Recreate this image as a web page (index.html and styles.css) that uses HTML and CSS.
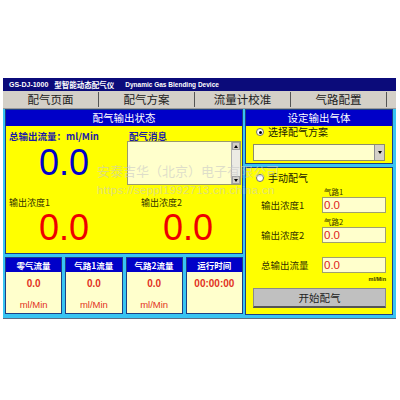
FILE: index.html
```html
<!DOCTYPE html>
<html>
<head>
<meta charset="utf-8">
<link rel="stylesheet" href="styles.css">
</head>
<body>
<div class="window">
  <div class="titlebar"><span class="t-code">GS-DJ-1000</span><span class="t-cn">型智能动态配气仪</span><span class="t-en">Dynamic Gas Blending Device</span></div>
  <div class="tabs">
    <div class="tab">配气页面</div>
    <div class="tab">配气方案</div>
    <div class="tab">流量计校准</div>
    <div class="tab">气路配置</div>
  </div>
  <div class="main">
    <div class="left">
      <div class="panel status">
        <div class="phead">配气输出状态</div>
        <div class="status-body">
          <div class="col col1">
            <div class="lbl-blue">总输出流量：ml/Min</div>
            <div class="big blue">0.0</div>
            <div class="lbl">输出浓度1</div>
            <div class="big red">0.0</div>
          </div>
          <div class="col col2">
            <div class="lbl-blue">配气消息</div>
            <div class="msgbox">
              <div class="vscroll">
                <span class="sbtn"><span class="arr-up"></span></span>
                <span class="strack"></span>
                <span class="sbtn"><span class="arr-down"></span></span>
              </div>
            </div>
            <div class="lbl lbl2">输出浓度2</div>
            <div class="big red">0.0</div>
          </div>
        </div>
      </div>
      <div class="stats">
        <div class="stat"><div class="shead">零气流量</div><div class="sbody"><div class="sval">0.0</div><div class="sunit">ml/Min</div></div></div>
        <div class="stat"><div class="shead">气路1流量</div><div class="sbody"><div class="sval">0.0</div><div class="sunit">ml/Min</div></div></div>
        <div class="stat"><div class="shead">气路2流量</div><div class="sbody"><div class="sval">0.0</div><div class="sunit">ml/Min</div></div></div>
        <div class="stat"><div class="shead">运行时间</div><div class="sbody"><div class="sval">00:00:00</div></div></div>
      </div>
    </div>
    <div class="right">
      <div class="panel setp">
        <div class="phead">设定输出气体</div>
        <div class="set-body">
          <div class="radio-row"><span class="radio checked"></span><span class="rtext">选择配气方案</span></div>
          <div class="select"><span class="sel-btn"><span class="arr-down"></span></span></div>
        </div>
      </div>
      <div class="panel manual">
        <div class="radio-row"><span class="radio"></span><span class="rtext">手动配气</span></div>
        <div class="sub">气路1</div>
        <div class="field"><span class="flabel">输出浓度1</span><span class="finput">0.0</span></div>
        <div class="sub">气路2</div>
        <div class="field"><span class="flabel">输出浓度2</span><span class="finput">0.0</span></div>
        <div class="field field3"><span class="flabel">总输出流量</span><span class="finput">0.0</span></div>
        <div class="unit">ml/Min</div>
        <div class="btn">开始配气</div>
      </div>
    </div>
  </div>
  <div class="watermark">
    <div class="wm1">安泰吉华（北京）电子有限公司</div>
    <div class="wm2">https://seppl1992713.cn.china.cn</div>
  </div>
</div>
</body>
</html>
```

FILE: styles.css
```css
body {
  margin: 0;
  background: #ffffff;
  font-family: "Noto Sans CJK SC", "Liberation Sans", sans-serif;
}

.window {
  position: relative;
  margin: 78px 0 0 3px;
  width: 393px;
  background: #d4d0c8;
}

.titlebar {
  height: 13px;
  background: #0b0b7a;
  color: #ffffff;
  font-family: "Liberation Sans", "Noto Sans CJK SC", sans-serif;
  font-weight: bold;
  font-size: 7px;
  line-height: 13px;
  padding-left: 6px;
  white-space: nowrap;
  display: flex;
}
.t-cn { margin-left: 6px; font-size: 7.5px; font-family: "Noto Sans CJK SC", sans-serif; }
.t-en { margin-left: 11px; font-size: 6.5px; }

.tabs {
  height: 17px;
  display: flex;
  background: #d4d0c8;
  border-bottom: 1px solid #9a9a9a;
}
.tab {
  width: 95px;
  border-right: 1px solid #555555;
  margin: 1px 0;
  text-align: center;
  font-size: 11.5px;
  line-height: 15px;
  color: #202020;
}

.main {
  display: flex;
  gap: 2px;
  padding: 0 2px 3px 2px;
  background: #38c4f2;
  border-bottom: 1px solid #5b6d86;
  height: 206px;
}

.left {
  width: 238px;
  display: flex;
  flex-direction: column;
  gap: 3px;
}
.right {
  width: 148px;
  display: flex;
  flex-direction: column;
  gap: 3px;
}

.panel {
  border: 1px solid #1d3f86;
  background: #ffff00;
}
.phead {
  height: 16px;
  background: #0000c8;
  color: #ffffff;
  font-size: 10.5px;
  line-height: 16px;
  text-align: center;
}

.status { height: 143px; }
.status-body {
  display: flex;
  height: 127px;
}
.col { display: flex; flex-direction: column; }
.col1 { width: 117px; padding-left: 3px; }
.col2 { flex: 1; }

.lbl-blue {
  margin-top: 5px;
  height: 10px;
  line-height: 10px;
  font-size: 9.5px;
  font-weight: bold;
  color: #1a1aa8;
  white-space: nowrap;
}
.col2 .lbl-blue { padding-left: 3px; }

.big {
  font-family: "Liberation Sans", sans-serif;
  font-size: 36px;
  line-height: 36px;
  height: 36px;
}
.blue { color: #0000cc; margin-top: 4px; padding-left: 30px; }
.red { color: #ee0000; margin-top: 2px; padding-left: 30px; }
.col2 .red { padding-left: 37px; }

.lbl {
  margin-top: 17px;
  height: 10px;
  line-height: 10px;
  font-size: 9px;
  color: #333300;
}
.lbl2 { margin-top: 13px; padding-left: 15px; }

.msgbox {
  margin-left: 1px;
  width: 112px;
  height: 42px;
  background: #ffffcc;
  border: 1px solid #9a9a6a;
  display: flex;
  justify-content: flex-end;
}
.vscroll {
  width: 8px;
  display: flex;
  flex-direction: column;
  background: #ecebe4;
  border-left: 1px solid #b0b0b0;
}
.sbtn {
  height: 8px;
  background: #d4d0c8;
  border: 1px solid #a0a0a0;
  box-sizing: border-box;
  display: flex;
  align-items: center;
  justify-content: center;
}
.strack { flex: 1; }
.arr-up {
  width: 0; height: 0;
  border-left: 2px solid transparent;
  border-right: 2px solid transparent;
  border-bottom: 3px solid #000;
}
.arr-down {
  width: 0; height: 0;
  border-left: 2px solid transparent;
  border-right: 2px solid transparent;
  border-top: 3px solid #000;
}

.stats {
  height: 57px;
  display: grid;
  grid-template-columns: repeat(4, 1fr);
  gap: 3px;
}
.stat {
  border: 1px solid #1d3f86;
  display: flex;
  flex-direction: column;
}
.shead {
  height: 14px;
  background: #0000c8;
  color: #ffffff;
  font-size: 8.5px;
  font-weight: bold;
  line-height: 14px;
  text-align: center;
}
.sbody {
  flex: 1;
  background: #ffffcc;
  text-align: center;
  font-family: "Liberation Sans", sans-serif;
  color: #e2321e;
}
.sval {
  margin-top: 7px;
  font-size: 10px;
  font-weight: bold;
  line-height: 10px;
}
.sunit {
  margin-top: 11px;
  font-size: 9.5px;
  line-height: 10px;
}

.setp { height: 53px; }
.set-body {
  display: flex;
  flex-direction: column;
}
.radio-row {
  display: flex;
  align-items: center;
  height: 10px;
  margin-top: 1px;
  padding-left: 10px;
}
.radio {
  width: 8px;
  height: 8px;
  border-radius: 50%;
  background: #ffffff;
  border: 1px solid #707070;
  box-sizing: border-box;
  position: relative;
}
.radio.checked::after {
  content: "";
  position: absolute;
  left: 1.5px;
  top: 1.5px;
  width: 3px;
  height: 3px;
  border-radius: 50%;
  background: #000000;
}
.rtext {
  margin-left: 4px;
  font-size: 10px;
  line-height: 10px;
  color: #222200;
}
.select {
  margin: 7px 0 0 7px;
  width: 132px;
  height: 17px;
  background: #ffffcc;
  border: 1px solid #8c8c6c;
  box-sizing: border-box;
  display: flex;
  justify-content: flex-end;
}
.sel-btn {
  width: 9px;
  background: #d4d0c8;
  border-left: 1px solid #909090;
  display: flex;
  align-items: center;
  justify-content: center;
}

.manual {
  flex: 1;
  display: flex;
  flex-direction: column;
}
.manual .radio-row { margin-top: 5px; }
.sub {
  margin-top: 5px;
  height: 8px;
  line-height: 8px;
  font-size: 7.5px;
  padding-left: 78px;
  color: #333300;
}
.field {
  margin-top: 1px;
  height: 16px;
  display: flex;
  align-items: center;
}
.field3 { margin-top: 14px; }
.flabel {
  width: 61px;
  padding-left: 15px;
  font-size: 9.5px;
  color: #333300;
  white-space: nowrap;
}
.finput {
  width: 64px;
  height: 16px;
  box-sizing: border-box;
  background: #ffffcc;
  border: 1px solid #a0a070;
  font-family: "Liberation Sans", sans-serif;
  font-size: 11.5px;
  line-height: 14px;
  color: #e02020;
  padding-left: 1px;
}
.unit {
  margin-top: 3px;
  height: 7px;
  line-height: 7px;
  font-family: "Liberation Sans", sans-serif;
  font-size: 5.5px;
  font-weight: bold;
  color: #333300;
  text-align: right;
  padding-right: 6px;
}
.btn {
  margin: 5px 0 0 7px;
  width: 133px;
  height: 20px;
  box-sizing: border-box;
  background: #c0c0c0;
  border: 1px solid #8a8a8a;
  border-bottom: 2px solid #555555;
  text-align: center;
  font-size: 10.5px;
  line-height: 18px;
  color: #222222;
}

.watermark {
  position: absolute;
  left: 94px;
  top: 86px;
  color: rgba(200, 200, 200, 0.6);
  pointer-events: none;
  white-space: nowrap;
}
.wm1 { font-size: 13px; line-height: 14px; }
.wm2 {
  margin-top: 6px;
  font-family: "Liberation Sans", sans-serif;
  font-size: 11.5px;
  line-height: 13px;
  letter-spacing: 0.3px;
}
```
